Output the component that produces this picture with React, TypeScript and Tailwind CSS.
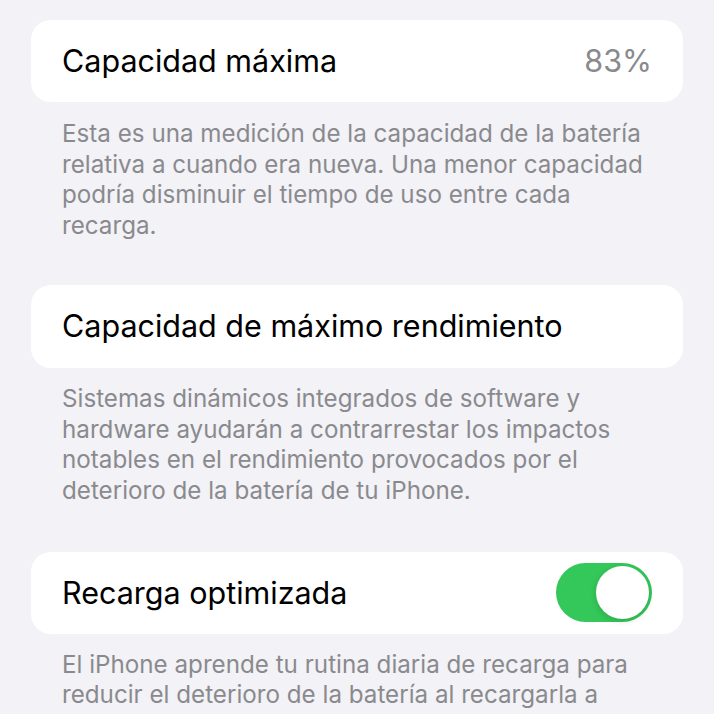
import React from "react";

const font = { fontFamily: "Inter, 'Noto Sans', sans-serif" };

function Desc({ lines, mt }: { lines: string[]; mt: string }) {
  return (
    <div className={`${mt} pl-[31px] text-[24.2px] leading-[30.7px] text-[#8a8a8e]`}>
      {lines.map((l, i) => (
        <div key={i} className="whitespace-nowrap">{l}</div>
      ))}
    </div>
  );
}

function Toggle() {
  return (
    <div className="w-[96px] h-[59px] rounded-full bg-[#34c759] flex items-center justify-end p-[3px]">
      <div className="w-[53px] h-[53px] rounded-full bg-white shadow-[0_2px_6px_rgba(0,0,0,0.15)]" />
    </div>
  );
}

export default function App() {
  return (
    <div className="w-[714px] h-[714px] overflow-hidden bg-[#f2f2f7] px-[31px] pt-[20px]" style={font}>
      <div className="h-[82px] rounded-[20px] bg-white flex items-center justify-between pl-[31px] pr-[31px]">
        <span className="text-[30.5px] text-black">Capacidad máxima</span>
        <span className="text-[30.5px] text-[#8a8a8e]">83%</span>
      </div>
      <Desc
        mt="mt-[17px]"
        lines={[
          "Esta es una medición de la capacidad de la batería",
          "relativa a cuando era nueva. Una menor capacidad",
          "podría disminuir el tiempo de uso entre cada",
          "recarga.",
        ]}
      />
      <div className="mt-[43px] h-[83px] rounded-[20px] bg-white flex items-center pl-[31px] pr-[31px]">
        <span className="text-[30.5px] text-black">Capacidad de máximo rendimiento</span>
      </div>
      <Desc
        mt="mt-[16px]"
        lines={[
          "Sistemas dinámicos integrados de software y",
          "hardware ayudarán a contrarrestar los impactos",
          "notables en el rendimiento provocados por el",
          "deterioro de la batería de tu iPhone.",
        ]}
      />
      <div className="mt-[45px] h-[82px] rounded-[20px] bg-white flex items-center justify-between pl-[31px] pr-[31px]">
        <span className="text-[30.5px] text-black">Recarga optimizada</span>
        <Toggle />
      </div>
      <Desc
        mt="mt-[16px]"
        lines={[
          "El iPhone aprende tu rutina diaria de recarga para",
          "reducir el deterioro de la batería al recargarla a",
        ]}
      />
    </div>
  );
}
